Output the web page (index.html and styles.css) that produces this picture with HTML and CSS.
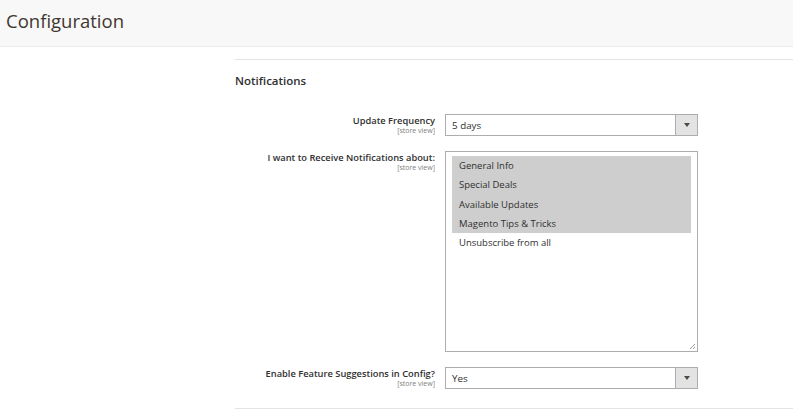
FILE: index.html
```html
<!DOCTYPE html>
<html>
<head>
<meta charset="utf-8">
<link rel="stylesheet" href="styles.css">
</head>
<body>
<header class="page-header">
  <h1 class="page-title">Configuration</h1>
</header>
<main class="main">
  <div class="sidebar"></div>
  <section class="content">
    <div class="section-rule"></div>
    <h2 class="section-title">Notifications</h2>
    <div class="row row-first">
      <div class="label">
        <div class="label-text">Update Frequency</div>
        <div class="scope">[store view]</div>
      </div>
      <div class="control">
        <div class="select">
          <span class="select-value">5 days</span>
          <span class="select-arrow"><span class="caret"></span></span>
        </div>
      </div>
    </div>
    <div class="row">
      <div class="label">
        <div class="label-text">I want to Receive Notifications about:</div>
        <div class="scope">[store view]</div>
      </div>
      <div class="control">
        <div class="multiselect">
          <div class="option selected">General Info</div>
          <div class="option selected">Special Deals</div>
          <div class="option selected">Available Updates</div>
          <div class="option selected">Magento Tips &amp; Tricks</div>
          <div class="option">Unsubscribe from all</div>
          <svg class="grip" width="7" height="7" viewBox="0 0 7 7"><path d="M6 1 L1 6 M6 4 L4 6" stroke="#999" stroke-width="1" fill="none"/></svg>
        </div>
      </div>
    </div>
    <div class="row">
      <div class="label">
        <div class="label-text">Enable Feature Suggestions in Config?</div>
        <div class="scope">[store view]</div>
      </div>
      <div class="control">
        <div class="select">
          <span class="select-value">Yes</span>
          <span class="select-arrow"><span class="caret"></span></span>
        </div>
      </div>
    </div>
    <div class="section-rule bottom-rule"></div>
  </section>
</main>
</body>
</html>
```
FILE: styles.css
```css
html, body {
  margin: 0;
  padding: 0;
  background: #ffffff;
  font-family: "Open Sans", "Liberation Sans", sans-serif;
  color: #303030;
}
.page-header {
  background: #f8f8f8;
  height: 46px;
  border-bottom: 1px solid #ececec;
  display: flex;
  align-items: center;
  padding-left: 6px;
}
.page-title {
  margin: 0;
  font-size: 18.5px;
  font-weight: 400;
  color: #41362f;
  line-height: 1;
  position: relative;
  top: -2px;
}
.main {
  display: flex;
}
.sidebar {
  width: 235px;
  flex: none;
}
.content {
  flex: 1;
  padding-top: 12px;
}
.section-rule {
  height: 1px;
  background: #e3e3e3;
}
.section-title {
  margin: 13px 0 0 0;
  font-size: 11.5px;
  font-weight: 600;
  color: #303030;
  line-height: 16px;
}
.row {
  display: flex;
  margin-top: 15px;
}
.row-first {
  margin-top: 25px;
}
.label {
  width: 200px;
  flex: none;
  text-align: right;
  padding-right: 10px;
}
.label-text {
  font-size: 9.3px;
  font-weight: 600;
  color: #303030;
  line-height: 13px;
}
.scope {
  font-size: 7px;
  color: #808080;
  line-height: 8px;
}
.control {
  width: 253px;
  flex: none;
}
.select {
  height: 20px;
  border: 1px solid #adadad;
  display: flex;
  align-items: center;
  background: #fff;
}
.select-value {
  flex: 1;
  font-size: 9.8px;
  color: #303030;
  padding-left: 6px;
}
.select-arrow {
  width: 21px;
  height: 20px;
  background: #e3e3e3;
  border-left: 1px solid #adadad;
  display: flex;
  align-items: center;
  justify-content: center;
}
.caret {
  width: 0;
  height: 0;
  border-left: 3px solid transparent;
  border-right: 3px solid transparent;
  border-top: 4px solid #514943;
}
.multiselect {
  position: relative;
  border: 1px solid #adadad;
  padding: 4px 6px;
  background: #fff;
  box-sizing: border-box;
  height: 201px;
}
.option {
  font-size: 9.5px;
  line-height: 19.3px;
  color: #303030;
  padding-left: 7px;
}
.option.selected {
  background: #cecece;
}
.grip {
  position: absolute;
  right: 1px;
  bottom: 1px;
}
.bottom-rule {
  margin-top: 19px;
}
```
